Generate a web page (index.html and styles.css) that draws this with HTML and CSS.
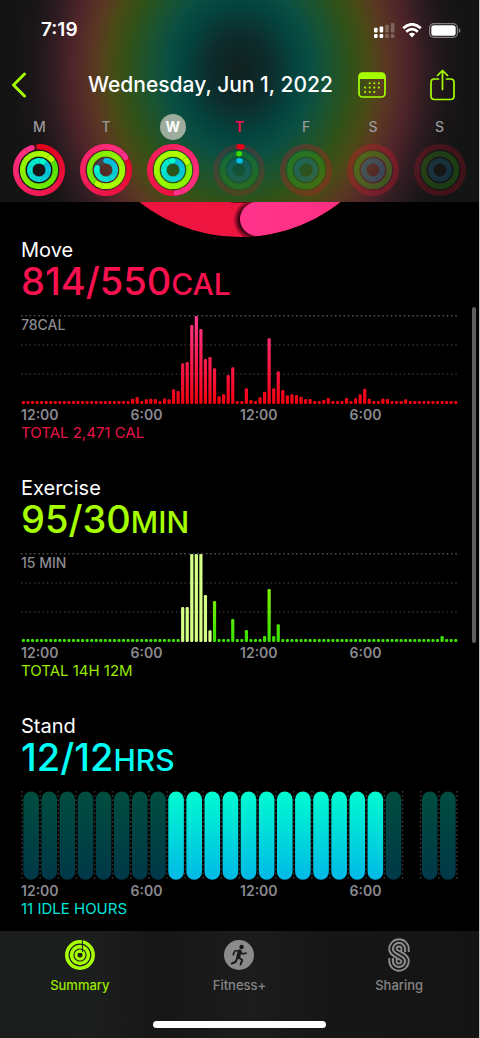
FILE: index.html
```html
<!DOCTYPE html>
<html lang="en">
<head>
<meta charset="utf-8">
<meta name="viewport" content="width=device-width, initial-scale=1">
<title>Activity Summary</title>
<link rel="stylesheet" href="styles.css">
</head>
<body>
<div class="app">
  <header class="header">
    <div class="status">
      <span class="time">7:19</span>
      <span class="status-icons">
        <svg width="21" height="15" viewBox="0 0 21 15" aria-hidden="true">
          <g fill="#fff"><rect x="0" y="4.8" width="3.6" height="4.7" rx="1"/><rect x="5.6" y="3.4" width="3.6" height="6.1" rx="1"/><rect x="0" y="11" width="3.6" height="4" rx="1"/><rect x="5.6" y="11" width="3.6" height="4" rx="1"/></g>
          <g fill="#fff" opacity=".25"><rect x="11.2" y="1.8" width="3.6" height="7.7" rx="1"/><rect x="16.8" y="0" width="3.6" height="9.5" rx="1"/><rect x="11.2" y="11" width="3.6" height="4" rx="1"/><rect x="16.8" y="11" width="3.6" height="4" rx="1"/></g>
        </svg>
        <svg width="20" height="15" viewBox="0 0 20 15" aria-hidden="true">
          <g fill="none" stroke="#fff" stroke-width="2.7"><path d="M1.2 5.2Q10-2.6 18.8 5.2"/><path d="M4.2 8.8Q10 3.4 15.8 8.800"/></g>
          <path d="M6.900 11Q10 8.500 13.100 11L10 14.400Z" fill="#fff"/>
        </svg>
        <svg width="32" height="15" viewBox="0 0 32 15" aria-hidden="true">
          <rect x=".6" y=".6" width="27.800" height="13.800" rx="4.400" fill="none" stroke="#fff" stroke-opacity=".45" stroke-width="1.200"/>
          <rect x="2.300" y="2.300" width="24.400" height="10.400" rx="2.800" fill="#fff"/>
          <path d="M29.800 5v5q1.600-.8 1.600-2.500T29.800 5" fill="#fff" opacity=".5"/>
        </svg>
      </span>
    </div>
    <div class="titlebar">
      <button class="icon-btn back" type="button" aria-label="Back">
        <svg width="16" height="26" viewBox="0 0 16 26"><path d="M13.500 2 2.500 13 13.500 24" fill="none" stroke="#a6ff00" stroke-width="3" stroke-linecap="round" stroke-linejoin="round"/></svg>
      </button>
      <h1 class="title">Wednesday, Jun 1, 2022</h1>
      <button class="icon-btn" type="button" aria-label="Calendar">
        <svg width="28" height="26" viewBox="0 0 28 26">
          <rect x="1" y="1" width="26" height="24" rx="3.500" fill="none" stroke="#a6ff00" stroke-width="1.700"/>
          <path d="M1 7V4Q1 .8 4 .8H24Q27 .8 27 4V7Z" fill="#a6ff00"/>
          <g stroke="#a6ff00" stroke-width="2.100" stroke-linecap="round" stroke-dasharray="0 4.600"><path d="M11.700 11.200h10"/><path d="M7.100 15.600h14.600"/><path d="M7.100 20h10"/></g>
        </svg>
      </button>
      <button class="icon-btn" type="button" aria-label="Share">
        <svg width="25" height="32" viewBox="0 0 25 32"><path d="M8.500 10H4.500Q1 10 1 13.500V27Q1 30.500 4.500 30.500H20.500Q24 30.500 24 27V13.500Q24 10 20.500 10H16.500M12.500 20.500V1.500M7.500 6.500l5-5 5 5" fill="none" stroke="#a6ff00" stroke-width="1.700" stroke-linecap="round" stroke-linejoin="round"/></svg>
      </button>
    </div>
    <div class="week" id="week"></div>
  </header>

  <main class="content">
    <svg class="hero" width="324" height="36" viewBox="0 0 324 36" aria-hidden="true">
      <defs>
        <linearGradient id="heroPink" x1="1" x2="0"><stop offset="0" stop-color="#ff2d80"/><stop offset="1" stop-color="#ff3389"/></linearGradient>
        <radialGradient id="heroShade"><stop offset=".7" stop-color="#300010"/><stop offset="1" stop-color="#300010" stop-opacity="0"/></radialGradient>
        <clipPath id="heroClip"><circle cx="162" cy="-127" r="162"/></clipPath>
      </defs>
      <g clip-path="url(#heroClip)">
        <circle cx="162" cy="-127" r="145" fill="none" stroke="#ee1440" stroke-width="35"/>
        <circle cx="176" cy="18" r="21" fill="url(#heroShade)"/>
        <path d="M179 17A145 145 0 0 0 300-83" fill="none" stroke="url(#heroPink)" stroke-width="34" stroke-linecap="round"/>
      </g>
    </svg>

    <section class="metric move">
      <h2 class="name">Move</h2>
      <p class="value">814/550<span class="unit">CAL</span></p>
      <div class="plot"><span class="peak">78CAL</span><svg class="chart" id="moveChart" viewBox="0 0 438 89" role="img" aria-label="Move by hour"></svg></div>
      <div class="axis"><span>12:00</span><span>6:00</span><span>12:00</span><span>6:00</span></div>
      <p class="total">TOTAL 2,471 CAL</p>
    </section>

    <section class="metric exercise">
      <h2 class="name">Exercise</h2>
      <p class="value">95/30<span class="unit">MIN</span></p>
      <div class="plot"><span class="peak">15 MIN</span><svg class="chart" id="exerciseChart" viewBox="0 0 438 89" role="img" aria-label="Exercise by hour"></svg></div>
      <div class="axis"><span>12:00</span><span>6:00</span><span>12:00</span><span>6:00</span></div>
      <p class="total">TOTAL 14H 12M</p>
    </section>

    <section class="metric stand">
      <h2 class="name">Stand</h2>
      <p class="value">12/12<span class="unit">HRS</span></p>
      <div class="plot"><svg class="chart" id="standChart" viewBox="0 0 438 89" role="img" aria-label="Stand by hour"></svg></div>
      <div class="axis"><span>12:00</span><span>6:00</span><span>12:00</span><span>6:00</span></div>
      <p class="total">11 IDLE HOURS</p>
    </section>
    <div class="scroll-thumb"></div>
  </main>

  <footer class="footer">
    <nav class="tabs">
      <a class="tab active" href="#summary">
        <svg width="34" height="34" viewBox="-17 -17 34 34" aria-hidden="true">
          <g fill="none" stroke="#a6ff00"><circle r="13.200" stroke-width="3.600"/><circle r="8.400" stroke-width="3.600"/><circle r="4" stroke-width="3"/></g>
          <path d="M2.400-15.500V-3" stroke="#1b1c1c" stroke-width="1"/>
          <path d="M0-4.500V-2" stroke="#a6ff00" stroke-width="2.500"/>
        </svg>
        <span>Summary</span>
      </a>
      <a class="tab" href="#fitness">
        <svg width="34" height="34" viewBox="-17 -17 34 34" aria-hidden="true">
          <circle r="15" fill="#8b8b8c"/>
          <circle cx="2.600" cy="-8" r="2.200" fill="#191a1a"/>
          <g fill="none" stroke="#191a1a" stroke-linecap="round" stroke-linejoin="round"><path d="M.6-3.500-.8 2" stroke-width="4"/><path d="M0-4.500-4.200-4-5.800-.3M1.500-3.500 3.600-1 7-1.800" stroke-width="1.700"/><path d="M-.2 2.500 3.200 5 1.600 9.500M-1.600 3-3.500 7-7.200 8.500" stroke-width="2"/></g>
        </svg>
        <span>Fitness+</span>
      </a>
      <a class="tab" href="#sharing">
        <svg width="34" height="34" viewBox="-17 -17 34 34" aria-hidden="true">
          <defs><path id="s" d="M6.100-3V-6A6.100 6.100 0 0 0-6.100-6C-6.100 0 6.100 0 6.100 6A6.100 6.100 0 0 1-6.100 6V3"/></defs>
          <g fill="none"><use href="#s" stroke="#8b8b8c" stroke-width="9.200"/><use href="#s" stroke="#161616" stroke-width="5.400"/><use href="#s" stroke="#8b8b8c" stroke-width="2.200"/></g>
        </svg>
        <span>Sharing</span>
      </a>
    </nav>
    <div class="home-bar"></div>
  </footer>
</div>
<script src="charts.js"></script>
</body>
</html>
```
FILE: styles.css
```css
* { box-sizing: border-box; }

body {
  margin: 0;
  background: #000;
  color: #fff;
  font-family: Inter, "Liberation Sans", sans-serif;
}

h1, h2, p { margin: 0; font-weight: 400; }

svg { display: block; }

.app {
  display: flex;
  flex-direction: column;
  min-height: 100vh;
  border-right: 1px solid #c4c4c4;
}

.header {
  padding-bottom: 6px;
  background: radial-gradient(ellipse 228px 270px at 50% 70px, #10201f 0, #0d2c2c 13%, #04453f 25%, #0a4f42 32%, #1b5430 40%, #305218 49%, #4a4a16 57%, #5a3822 64%, #50252a 73%, #301c22 82%, #1b1617 91%, #141414 100%);
}

.status {
  display: flex;
  justify-content: space-between;
  align-items: center;
  padding: 18px 18px 0 41px;
}

.time { font-size: 19px; font-weight: 600; line-height: 24px; }

.status-icons { display: flex; align-items: center; gap: 7px; }

.titlebar {
  display: flex;
  align-items: center;
  height: 50px;
  margin-top: 18px;
  padding: 0 24px 0 11px;
}

.title { flex: 1; padding-left: 61px; font-size: 21px; font-weight: 500; line-height: 28px; white-space: nowrap; }

.icon-btn { padding: 0; border: 0; background: none; }
.icon-btn + .icon-btn { margin-left: 44px; }

.week {
  display: grid;
  grid-template-columns: repeat(7, 1fr);
  padding: 4px 6px 0;
}

.day {
  display: flex;
  flex-direction: column;
  align-items: center;
  gap: 4px;
  padding: 0;
  border: 0;
  background: none;
  color: #98989d;
  font: 500 14px/26px Inter, "Liberation Sans", sans-serif;
}

.day-name { width: 26px; border-radius: 50%; text-align: center; }
.day.selected .day-name { background: #9dac9c; color: #fff; font-weight: 700; }
.day.today .day-name { color: #fa114f; font-weight: 600; }

.content { position: relative; flex: 1; padding-bottom: 12px; }

.hero { margin: 0 auto; }

.metric { padding: 0 20px 0 21px; }
.metric + .metric { margin-top: 34px; }

.name { font-size: 20px; line-height: 24px; }

.value { font-size: 38px; font-weight: 500; line-height: 38px; }
.unit { font-size: 30px; line-height: 30px; }

.plot { position: relative; margin-top: 15px; }
.chart { width: 100%; height: auto; }
.peak { position: absolute; top: 1px; left: 0; color: #8a8a8f; font-size: 14px; font-weight: 500; line-height: 18px; }

.axis {
  display: grid;
  grid-template-columns: repeat(4, 1fr);
  margin-top: 2px;
  color: #8a8a8f;
  font-size: 14px;
  font-weight: 600;
  line-height: 18px;
}

.total { font-size: 15px; line-height: 18px; }

.move .value { color: #fa114f; }
.move .total { color: #e81449; }
.exercise .value { color: #a6ff00; }
.exercise .total { color: #98e800; }
.stand .value { color: #00fff6; }
.stand .total { color: #00e5dc; }

.scroll-thumb {
  position: absolute;
  top: 105px;
  right: 3px;
  width: 4px;
  height: 336px;
  border-radius: 2px;
  background: #5e5e5e;
}

.footer {
  padding: 7px 0 10px;
  background: linear-gradient(90deg, #1b1c1c 0, #1c1d1d 20%, #161616 33%, #1b1c1c 52%, #161616 68%, #141414 100%);
}

.tabs { display: grid; grid-template-columns: repeat(3, 1fr); }

.tab {
  display: flex;
  flex-direction: column;
  align-items: center;
  gap: 4px;
  color: #858586;
  font-size: 13px;
  font-weight: 500;
  line-height: 18px;
  text-decoration: none;
}

.tab.active { color: #98e800; }

.home-bar {
  width: 36%;
  height: 7px;
  margin: 27px auto 0;
  border-radius: 4px;
  background: #fff;
}
```
FILE: charts.js
```js
const RINGS = [
  { r: 23.2, from: [224, 0, 22], to: [255, 50, 138], track: '#e0142a' },
  { r: 16.3, from: [60, 220, 0], to: [184, 255, 0], track: '#3ccc10' },
  { r: 9.2, from: [0, 186, 225], to: [0, 250, 208], track: '#1898c8' }
];

const DAYS = [
  { name: 'M', rings: [0.95, 1.14, 1.08] },
  { name: 'T', rings: [1.16, 1.59, 0.79] },
  { name: 'W', rings: [1.48, 2.17, 1], state: 'selected' },
  { name: 'T', rings: [0.02, 0.003, 0.02], state: 'today', dim: 0.2 },
  { name: 'F', rings: [0, 0, 0], dim: 0.27 },
  { name: 'S', rings: [0, 0, 0], dim: 0.3 },
  { name: 'S', rings: [0, 0, 0], dim: 0.22 }
];

function mix(a, b, t) {
  return 'rgb(' + a.map((v, i) => Math.round(v + (b[i] - v) * t)).join() + ')';
}

function point(r, turn) {
  const a = turn * 2 * Math.PI;
  return (r * Math.sin(a)).toFixed(2) + ' ' + (-r * Math.cos(a)).toFixed(2);
}

function ring(style, progress, dim) {
  const { r, from, to, track } = style;
  let out = `<circle r="${r}" stroke="${track}" stroke-opacity="${dim || 0.22}"/>`;
  if (!progress) return out;
  const steps = Math.max(1, Math.ceil(progress * 48));
  for (let i = 0; i < steps; i++) {
    const a = progress * i / steps;
    const b = progress * (i + 1) / steps;
    const cap = i === 0 || i === steps - 1;
    const d = `M${point(r, a)}A${r} ${r} 0 0 1 ${point(r, b)}`;
    if (i === steps - 1 && progress > 0.9) {
      out += `<path d="${d}" stroke="#000" stroke-opacity=".25" stroke-width="6.6" stroke-linecap="round"/>`;
    }
    const end = cap ? b : b + 0.004;
    const seg = `M${point(r, a)}A${r} ${r} 0 0 1 ${point(r, end)}`;
    out += `<path d="${seg}" stroke="${mix(from, to, Math.min(1, b / Math.max(progress, 0.8)))}"${cap ? ' stroke-linecap="round"' : ''}/>`;
  }
  return out;
}

document.getElementById('week').innerHTML = DAYS.map(day => `
  <button type="button" class="day ${day.state || ''}">
    <span class="day-name">${day.name}</span>
    <svg width="52" height="52" viewBox="-26 -26 52 52" aria-hidden="true">
      <g fill="none" stroke-width="5.500">${RINGS.map((s, i) => ring(s, day.rings[i], day.dim)).join('')}</g>
    </svg>
  </button>`).join('');

/* Quarter-hour bars, keyed by slot; every other slot shows the resting height. */
const MOVE = {
  24: 5.3, 25: 7, 27: 4.7, 28: 5.3, 29: 5, 31: 5.5, 32: 4.7, 33: 14.7, 34: 13, 35: 40.7, 36: 42, 37: 79, 38: 88,
  39: 75, 40: 45, 41: 47, 42: 35.7, 43: 7.7, 44: 9.7, 45: 29, 46: 36.7, 49: 15.7, 50: 4, 52: 6.7, 53: 12.3,
  54: 65.7, 55: 15.7, 56: 32.7, 57: 14, 58: 8.7, 59: 9.7, 60: 9, 61: 7.3, 62: 5, 63: 5, 66: 4, 67: 6, 71: 6,
  73: 5.7, 74: 9.7, 75: 15.3, 76: 5.3, 79: 5.5, 80: 5, 84: 4.7
};
const EXERCISE = {
  35: 35, 36: 35, 37: 88, 38: 88, 39: 88, 40: 47, 41: 11.7, 42: 41, 46: 23, 49: 12, 53: 6, 54: 53, 55: 6, 56: 17.7, 92: 6
};

function bars(id, data, low, high, highlight) {
  let out = `<defs><linearGradient id="${id}Fill" gradientUnits="userSpaceOnUse" x1="0" y1="89" x2="0" y2="0">
    <stop offset="0" stop-color="${low}"/><stop offset="1" stop-color="${high}"/></linearGradient></defs>`;
  [0.8, 30, 59].forEach((y, i) => {
    out += `<path d="M0 ${y}H436" stroke="${i ? '#303030' : '#505050'}" stroke-width="1.4" stroke-dasharray="1.5 2.8"/>`;
  });
  for (let i = 0; i < 96; i++) {
    const h = data[i] || 3;
    const pale = highlight && i >= highlight[0] && i <= highlight[1];
    out += `<rect x="${(0.8 + i * 4.551).toFixed(2)}" y="${89 - h}" width="3.2" height="${h}" rx="1.2" fill="${pale ? '#d6ff86' : `url(#${id}Fill)`}"/>`;
  }
  document.getElementById(id).innerHTML = out;
}

bars('moveChart', MOVE, '#f4000f', '#ff3a90');
bars('exerciseChart', EXERCISE, '#38e000', '#b4ff00', [35, 41]);

let stand = `<defs>
  <linearGradient id="lit" x2="0" y2="1"><stop offset="0" stop-color="#00fbd0"/><stop offset="1" stop-color="#00b9e6"/></linearGradient>
  <linearGradient id="idle" x2="0" y2="1"><stop offset="0" stop-color="#004d3f"/><stop offset="1" stop-color="#003848"/></linearGradient></defs>`;
for (let i = 0; i <= 24; i++) {
  const x = 1 + i * 18.12;
  stand += `<path d="M${x.toFixed(2)} 0V88" stroke="#3a3a3a" stroke-width="1.5" stroke-dasharray="1.5 2.8"/>`;
  if (i < 24 && i !== 21) {
    stand += `<rect x="${(x + 1.3).toFixed(2)}" y="0.5" width="15.6" height="88.2" rx="7.8" fill="url(#${i > 7 && i < 20 ? 'lit' : 'idle'})"/>`;
  }
}
document.getElementById('standChart').innerHTML = stand;
```
